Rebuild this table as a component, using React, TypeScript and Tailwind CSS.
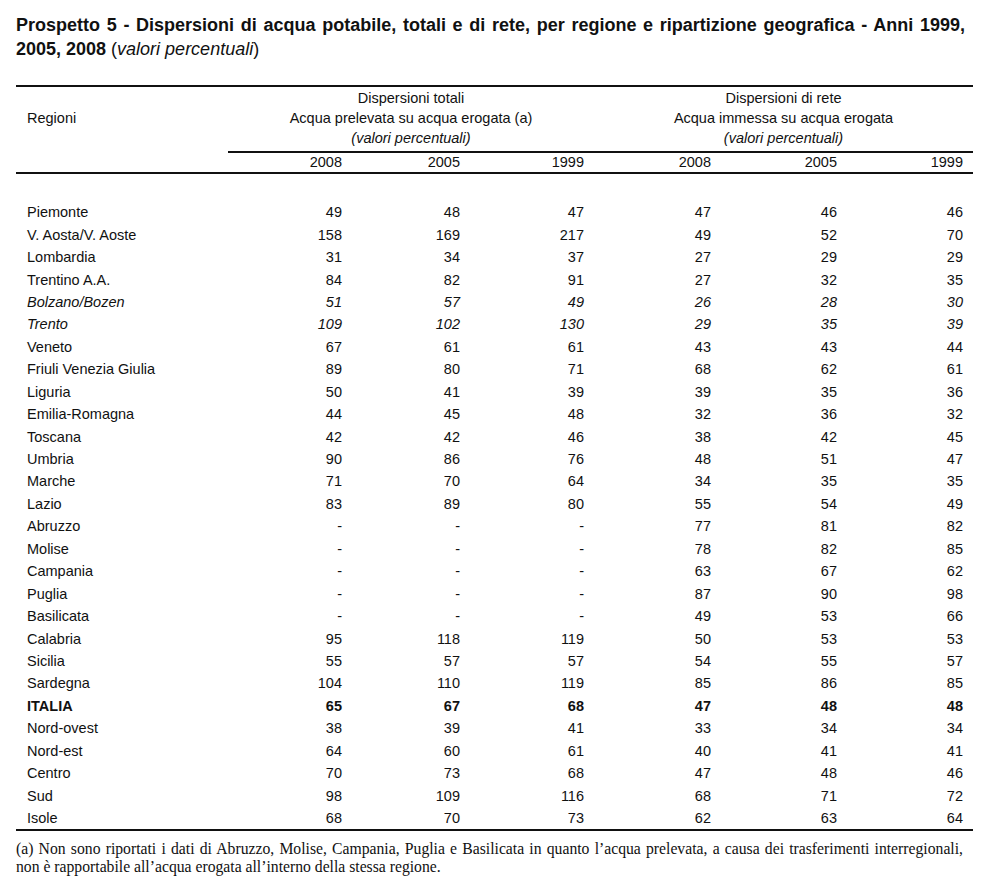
import React from "react";

type Row = {
  name: string;
  values: string[];
  style?: "italic" | "bold";
};

const rows: Row[] = [
  { name: "Piemonte", values: ["49", "48", "47", "47", "46", "46"] },
  { name: "V. Aosta/V. Aoste", values: ["158", "169", "217", "49", "52", "70"] },
  { name: "Lombardia", values: ["31", "34", "37", "27", "29", "29"] },
  { name: "Trentino A.A.", values: ["84", "82", "91", "27", "32", "35"] },
  { name: "Bolzano/Bozen", values: ["51", "57", "49", "26", "28", "30"], style: "italic" },
  { name: "Trento", values: ["109", "102", "130", "29", "35", "39"], style: "italic" },
  { name: "Veneto", values: ["67", "61", "61", "43", "43", "44"] },
  { name: "Friuli Venezia Giulia", values: ["89", "80", "71", "68", "62", "61"] },
  { name: "Liguria", values: ["50", "41", "39", "39", "35", "36"] },
  { name: "Emilia-Romagna", values: ["44", "45", "48", "32", "36", "32"] },
  { name: "Toscana", values: ["42", "42", "46", "38", "42", "45"] },
  { name: "Umbria", values: ["90", "86", "76", "48", "51", "47"] },
  { name: "Marche", values: ["71", "70", "64", "34", "35", "35"] },
  { name: "Lazio", values: ["83", "89", "80", "55", "54", "49"] },
  { name: "Abruzzo", values: ["-", "-", "-", "77", "81", "82"] },
  { name: "Molise", values: ["-", "-", "-", "78", "82", "85"] },
  { name: "Campania", values: ["-", "-", "-", "63", "67", "62"] },
  { name: "Puglia", values: ["-", "-", "-", "87", "90", "98"] },
  { name: "Basilicata", values: ["-", "-", "-", "49", "53", "66"] },
  { name: "Calabria", values: ["95", "118", "119", "50", "53", "53"] },
  { name: "Sicilia", values: ["55", "57", "57", "54", "55", "57"] },
  { name: "Sardegna", values: ["104", "110", "119", "85", "86", "85"] },
  { name: "ITALIA", values: ["65", "67", "68", "47", "48", "48"], style: "bold" },
  { name: "Nord-ovest", values: ["38", "39", "41", "33", "34", "34"] },
  { name: "Nord-est", values: ["64", "60", "61", "40", "41", "41"] },
  { name: "Centro", values: ["70", "73", "68", "47", "48", "46"] },
  { name: "Sud", values: ["98", "109", "116", "68", "71", "72"] },
  { name: "Isole", values: ["68", "70", "73", "62", "63", "64"] },
];

const years = ["2008", "2005", "1999", "2008", "2005", "1999"];

// name column + six data columns, widths read off the original
const gridCols = "grid grid-cols-[212px_124px_118px_124px_127px_126px_126px]";

export default function App() {
  return (
    <div className="min-h-screen bg-white text-[#111] font-['Liberation_Sans',Arial,sans-serif] pl-4 pr-[21px] pt-[13px]">
      <h1 className="w-[949px] text-[18px] font-bold leading-6">
        <div className="text-justify [text-align-last:justify]">
          Prospetto 5 - Dispersioni di acqua potabile, totali e di rete, per regione e
          ripartizione geografica - Anni 1999,
        </div>
        <div>
          2005, 2008 <span className="font-normal">(</span>
          <span className="font-normal italic">valori percentuali</span>
          <span className="font-normal">)</span>
        </div>
      </h1>

      <div className="mt-[24px] border-t-2 border-[#111] text-[14.5px] leading-5">
        {/* header */}
        <div className={gridCols}>
          <div className="row-span-3 flex items-center pl-[11px]">Regioni</div>
          <div className="col-span-3 text-center pt-[1px]">Dispersioni totali</div>
          <div className="col-span-3 text-center pt-[1px]">Dispersioni di rete</div>
          <div className="col-span-3 text-center">Acqua prelevata su acqua erogata (a)</div>
          <div className="col-span-3 text-center">Acqua immessa su acqua erogata</div>
          <div className="col-span-3 text-center italic">(valori percentuali)</div>
          <div className="col-span-3 text-center italic">(valori percentuali)</div>
        </div>
        <div className={gridCols + " mt-[3px]"}>
          <div />
          <div className="col-span-6 grid grid-cols-subgrid border-t-2 border-[#111]">
            {years.map((y, i) => (
              <div key={i} className="text-right pr-[10px] h-[19px] leading-[19px]">
                {y}
              </div>
            ))}
          </div>
        </div>
        <div className="border-t-2 border-[#111]" />

        {/* body */}
        <div className="pt-[27px]">
          {rows.map((r) => (
            <div
              key={r.name}
              className={
                gridCols +
                " h-[22.45px] items-center" +
                (r.style === "italic" ? " italic" : "") +
                (r.style === "bold" ? " font-bold" : "")
              }
            >
              <div className="pl-[11px] whitespace-nowrap">{r.name}</div>
              {r.values.map((v, i) => (
                <div key={i} className="text-right pr-[10px]">
                  {v}
                </div>
              ))}
            </div>
          ))}
        </div>
        <div className="border-t-2 border-[#111]" />
      </div>

      <div className="mt-[9px] w-[947px] font-['Liberation_Serif','Times_New_Roman',serif] text-[15.7px] leading-[18px]">
        <div className="text-justify [text-align-last:justify]">
          (a) Non sono riportati i dati di Abruzzo, Molise, Campania, Puglia e Basilicata in
          quanto l’acqua prelevata, a causa dei trasferimenti interregionali,
        </div>
        <div>non è rapportabile all’acqua erogata all’interno della stessa regione.</div>
      </div>
    </div>
  );
}
